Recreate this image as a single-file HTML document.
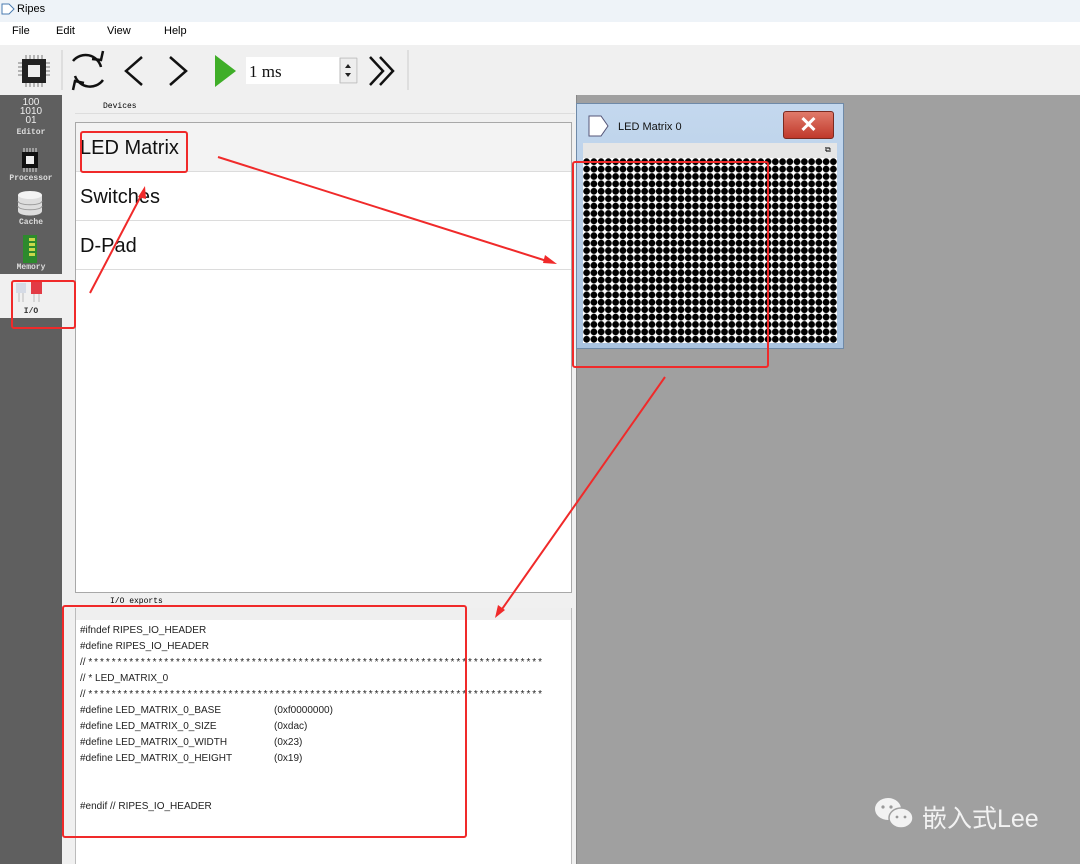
<!DOCTYPE html>
<html><head><meta charset="utf-8"><style>
*{margin:0;padding:0;box-sizing:border-box}
body{width:1080px;height:864px;position:relative;overflow:hidden;background:#f0f0f0;font-family:"Liberation Sans","Noto Sans CJK SC",sans-serif}
.a{position:absolute}
.code{font-family:"Liberation Sans",sans-serif;font-size:10px;color:#222;white-space:pre;line-height:16px}
.st{letter-spacing:1.95px}
.item{position:absolute;left:0;right:0;height:49px;border-bottom:1px solid #dcdcdc;font-size:20px;padding:14px 0 0 4px;color:#111}
.side{font-family:"Liberation Mono",monospace;font-size:8px;color:#ddd;text-align:center;width:62px;font-weight:bold}
</style></head><body>
<div class="a" style="left:0;top:0;width:1080px;height:22px;background:#eef3f8"></div>
<svg class="a" style="left:1px;top:2px" width="14" height="14"><path d="M1 2h7l5 5-5 5H1z" fill="#fff" stroke="#4a7bb0"/></svg>
<div class="a" style="left:17px;top:3px;font-size:11px">Ripes</div>
<div class="a" style="left:0;top:22px;width:1080px;height:23px;background:#fff"></div>
<div class="a" style="left:12px;top:25px;font-size:11px">File</div>
<div class="a" style="left:56px;top:25px;font-size:11px">Edit</div>
<div class="a" style="left:107px;top:25px;font-size:11px">View</div>
<div class="a" style="left:164px;top:25px;font-size:11px">Help</div>
<div class="a" style="left:0;top:45px;width:1080px;height:50px;background:#f0f0f0"></div>
<svg class="a" style="left:0;top:45px" width="420" height="50">
<g stroke="#777" stroke-width="1"><path d="M26 10v6M30 10v6M34 10v6M38 10v6M42 10v6M26 36v6M30 36v6M34 36v6M38 36v6M42 36v6M18 18h6M18 22h6M18 26h6M18 30h6M44 18h6M44 22h6M44 26h6M44 30h6"/></g>
<rect x="22" y="14" width="24" height="24" fill="#222"/><rect x="28" y="20" width="12" height="12" fill="#eee"/>
<path d="M62 5v40" stroke="#ccc"/>
<g fill="none" stroke="#111" stroke-width="2.5"><path d="M101 22a16 16 0 0 0-28-6M75 31a16 16 0 0 0 28 4"/><path d="M92 14l9 1 2-9M84 38l-9-2-2 9"/><path d="M142 12l-16 14 16 14M170 12l16 14-16 14"/><path d="M370 12l13 14-13 14M380 12l13 14-13 14"/></g>
<path d="M215 10l21 16-21 16z" fill="#3fae28"/>
<rect x="246" y="12" width="112" height="27" fill="#fff"/><rect x="340" y="13" width="17" height="25" fill="#eee" stroke="#bbb"/>
<path d="M345 23l3-4 3 4zM345 28l3 4 3-4z" fill="#222"/>
<text x="249" y="32" font-family="Liberation Serif" font-size="17" fill="#111">1 ms</text>
<path d="M408 5v40" stroke="#ccc"/>
</svg>
<!-- sidebar -->
<div class="a" style="left:0;top:95px;width:62px;height:769px;background:#5f5f5f"></div>
<div class="a" style="left:0;top:274px;width:62px;height:44px;background:#f0f0f0"></div>
<div class="a side" style="left:0;top:98px;font-size:10px;line-height:9px;color:#eee;font-family:'Liberation Sans';font-weight:normal">100<br>1010<br>01</div>
<div class="a side" style="left:0;top:128px">Editor</div>
<svg class="a" style="left:15px;top:146px" width="30" height="28"><g stroke="#ddd"><path d="M9 2v5M12 2v5M15 2v5M18 2v5M21 2v5M9 21v5M12 21v5M15 21v5M18 21v5M21 21v5"/></g><rect x="7" y="6" width="16" height="16" fill="#111"/><rect x="11" y="10" width="8" height="8" fill="#eee"/></svg>
<div class="a side" style="left:0;top:174px">Processor</div>
<svg class="a" style="left:17px;top:190px" width="26" height="28"><path d="M1 5v16c0 6 24 6 24 0V5" fill="#ddd"/><ellipse cx="13" cy="5" rx="12" ry="4" fill="#f4f4f4"/><path d="M1 11c0 5 24 5 24 0M1 16c0 5 24 5 24 0" stroke="#999" fill="none"/></svg>
<div class="a side" style="left:0;top:218px">Cache</div>
<svg class="a" style="left:20px;top:234px" width="20" height="30"><rect x="3" y="1" width="14" height="28" fill="#2d8a2d"/><g fill="#c9d84a"><rect x="9" y="4" width="6" height="3"/><rect x="9" y="9" width="6" height="3"/><rect x="9" y="14" width="6" height="3"/><rect x="9" y="19" width="6" height="3"/></g></svg>
<div class="a side" style="left:0;top:263px">Memory</div>
<svg class="a" style="left:14px;top:281px" width="34" height="22"><rect x="2" y="2" width="10" height="10" fill="#d5dbe6"/><rect x="17" y="1" width="11" height="12" fill="#e23b45"/><g stroke="#bbb"><path d="M5 12v9M9 12v9M20 13v8M25 13v8"/></g></svg>
<div class="a side" style="left:0;top:307px;color:#333">I/O</div>
<!-- devices -->
<div class="a" style="left:103px;top:102px;font-family:'Liberation Mono';font-size:8px">Devices</div>
<div class="a" style="left:75px;top:113px;width:500px;height:1px;background:#ddd"></div>
<div class="a" style="left:75px;top:122px;width:497px;height:471px;background:#fff;border:1px solid #a8a8a8">
<div class="item" style="top:0;background:#f3f3f3">LED Matrix</div>
<div class="item" style="top:49px">Switches</div>
<div class="item" style="top:98px">D-Pad</div>
</div>
<div class="a" style="left:110px;top:597px;font-family:'Liberation Mono';font-size:8px">I/O exports</div>
<div class="a" style="left:75px;top:608px;width:497px;height:256px;background:#fff;border-left:1px solid #bbb;border-right:1px solid #bbb"><div style="height:12px;background:#efefef"></div></div>
<div class="a code" style="left:80px;top:623px">#ifndef RIPES_IO_HEADER
#define RIPES_IO_HEADER
// <span class="st">******************************************************************************</span>
// * LED_MATRIX_0
// <span class="st">******************************************************************************</span>
#define LED_MATRIX_0_BASE
#define LED_MATRIX_0_SIZE
#define LED_MATRIX_0_WIDTH
#define LED_MATRIX_0_HEIGHT


#endif // RIPES_IO_HEADER</div>
<div class="a code" style="left:274px;top:703px">(0xf0000000)
(0xdac)
(0x23)
(0x19)</div>
<!-- right area -->
<div class="a" style="left:576px;top:95px;width:504px;height:769px;background:#a0a0a0;border-left:1px solid #888"></div>
<div class="a" style="left:576px;top:103px;width:268px;height:246px;background:linear-gradient(#c4d8ee,#a9c3e0);border:1px solid #6f8aa8"></div>
<svg class="a" style="left:588px;top:115px" width="22" height="22"><path d="M1 1h12l7 10-7 10H1z" fill="#fff" stroke="#557"/></svg>
<div class="a" style="left:618px;top:121px;font-size:11px;color:#111">LED Matrix 0</div>
<div class="a" style="left:783px;top:111px;width:51px;height:28px;border-radius:3px;background:linear-gradient(#e07a6a,#c0392b);border:1px solid #7a2a20"></div>
<div class="a" style="left:783px;top:111px;width:51px;height:28px;color:#fff;font-size:22px;font-weight:bold;text-align:center;line-height:28px">✕</div>
<div class="a" style="left:583px;top:143px;width:254px;height:15px;background:#e6e6e6"></div>
<div class="a" style="left:825px;top:145px;font-size:8px">⧉</div>
<svg class="a" style="left:583px;top:158px" width="254" height="185"><defs><pattern id="p" width="7.257" height="7.4" patternUnits="userSpaceOnUse"><rect width="7.257" height="7.4" fill="#fff"/><circle cx="3.63" cy="3.7" r="3.4" fill="#000"/></pattern></defs><rect width="254" height="185" fill="url(#p)"/></svg>
<!-- watermark -->
<svg class="a" style="left:874px;top:796px" width="42" height="38"><ellipse cx="14" cy="13" rx="13" ry="11" fill="#f2f2f2"/><ellipse cx="27" cy="22" rx="12" ry="10" fill="#f2f2f2" stroke="#a0a0a0" stroke-width="1.5"/><g fill="#999"><circle cx="9" cy="11" r="1.6"/><circle cx="17" cy="11" r="1.6"/><circle cx="23" cy="21" r="1.4"/><circle cx="31" cy="21" r="1.4"/></g></svg>
<div class="a" style="left:922px;top:799px;font-size:25px;color:#f2f2f2;font-family:'Liberation Sans','Noto Sans CJK SC',sans-serif">嵌入式Lee</div>
<!-- annotations -->
<svg class="a" style="left:0;top:0" width="1080" height="864"><g fill="none" stroke="#f02a2a" stroke-width="2">
<rect x="81" y="132" width="106" height="40" rx="2"/><rect x="12" y="281" width="63" height="47" rx="2"/><rect x="573" y="162" width="195" height="205" rx="2"/><rect x="63" y="606" width="403" height="231" rx="2"/>
<path d="M218 157L550 262M90 293L143 192M665 377L500 612"/></g>
<g fill="#f02a2a"><path d="M557 264l-12-9-2 8z"/><path d="M145 186l-7 11 8 2z"/><path d="M495 618l3-13 7 5z"/></g></svg>
</body></html>
